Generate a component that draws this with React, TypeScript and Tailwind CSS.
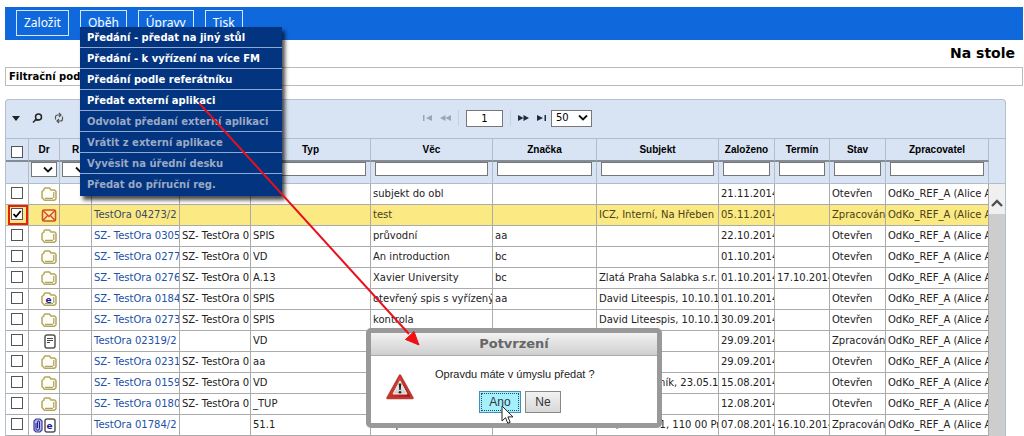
import { useState } from "react"

type Kind = "folder" | "mail" | "efolder" | "doc" | "edoc";

type Row = {
    kind: Kind;
    ref: string;
    file?: string;
    type?: string;
    subject?: string;
    mark?: string;
    party?: string;
    created: string;
    due?: string;
    state: string;
};

const OWNER = "OdKo_REF_A (Alice A";

const rows: Row[] = [
    { kind: "folder", ref: "", subject: "subjekt do obl", created: "21.11.2014", state: "Otevřen" },
    { kind: "mail", ref: "TestOra 04273/2", subject: "test", party: "ICZ, Interní, Na Hřeben", created: "05.11.2014", state: "Zpracován" },
    { kind: "folder", ref: "SZ- TestOra 0305", file: "SZ- TestOra 0", type: "SPIS", subject: "průvodní", mark: "aa", created: "22.10.2014", state: "Otevřen" },
    { kind: "folder", ref: "SZ- TestOra 0277", file: "SZ- TestOra 0", type: "VD", subject: "An introduction", mark: "bc", created: "01.10.2014", state: "Otevřen" },
    { kind: "folder", ref: "SZ- TestOra 0276", file: "SZ- TestOra 0", type: "A.13", subject: "Xavier University", mark: "bc", party: "Zlatá Praha Salabka s.r.", created: "01.10.2014", due: "17.10.2014", state: "Otevřen" },
    { kind: "efolder", ref: "SZ- TestOra 0184", file: "SZ- TestOra 0", type: "SPIS", subject: "otevřený spis s vyřízený", mark: "aa", party: "David Liteespis, 10.10.1", created: "01.10.2014", state: "Otevřen" },
    { kind: "folder", ref: "SZ- TestOra 0273", file: "SZ- TestOra 0", type: "SPIS", subject: "kontrola", party: "David Liteespis, 10.10.1", created: "30.09.2014", state: "Otevřen" },
    { kind: "doc", ref: "TestOra 02319/2", type: "VD", created: "29.09.2014", state: "Zpracován" },
    { kind: "folder", ref: "SZ- TestOra 0231", file: "SZ- TestOra 0", type: "aa", created: "29.09.2014", state: "Otevřen" },
    { kind: "folder", ref: "SZ- TestOra 0159", file: "SZ- TestOra 0", type: "VD", party: "Robert Úředník, 23.05.1", created: "15.08.2014", state: "Otevřen" },
    { kind: "folder", ref: "SZ- TestOra 0180", file: "SZ- TestOra 0", type: "_TUP", created: "12.08.2014", state: "Otevřen" },
    { kind: "edoc", ref: "TestOra 01784/2", type: "51.1", subject: "test předání na více FM", mark: "aa", party: "ICZ, Divoká 1, 110 00 Pr", created: "07.08.2014", due: "16.10.2014", state: "Zpracován" },
];

const menuItems = [
    { label: "Předání - předat na jiný stůl", enabled: true },
    { label: "Předání - k vyřízení na více FM", enabled: true },
    { label: "Předání podle referátníku", enabled: true },
    { label: "Předat externí aplikaci", enabled: true },
    { label: "Odvolat předaní externí aplikaci", enabled: false },
    { label: "Vrátit z externí aplikace", enabled: false },
    { label: "Vyvěsit na úřední desku", enabled: false },
    { label: "Předat do příruční reg.", enabled: false },
];

const headers = ["Typ", "Věc", "Značka", "Subjekt", "Založeno", "Termín", "Stav", "Zpracovatel"];

function FolderIcon({ letter }: { letter?: boolean }) {
    return (
        <svg width="16" height="15" viewBox="0 0 16 15" fill="none">
            <path d="M3.500 13.300 1 10.500V4.500l2-1.500V2l1-1h4.500l1.500 2h3.500L15 4.500v7.300l-1.500 1.500z" fill="#fffef4" stroke="#b5a75e" strokeWidth="1.500" strokeLinejoin="round" />
            <path d="M12.800 5v6M4 11.300h8" stroke="#9a8b45" />
            {letter && <text x="4.500" y="10.500" className="font-['DejaVu_Sans'] text-[9px] font-bold" fill="#1d1a9a">e</text>}
        </svg>
    )
}

function MailIcon() {
    return (
        <svg width="16" height="13" viewBox="0 0 16 13" fill="none" stroke="#cf5222" strokeWidth="1.6">
            <rect x="1.500" y="1" width="13" height="11" rx="1.500" fill="#ffe7a8" />
            <path d="m2 1.500 6 6 6-6M2 11.500l4.500-5M14 11.500l-4.500-5" strokeWidth="1.300" />
        </svg>
    )
}

function DocIcon({ letter }: { letter?: boolean }) {
    return (
        <svg width="14" height="15" viewBox="0 0 14 15" fill="none">
            <rect x="2" y="1" width="10" height="13" rx="2" fill="#fff" stroke="#555" strokeWidth="1.500" />
            {letter ? (
                <text x="3.500" y="10.500" className="font-['DejaVu_Sans'] text-[9px] font-bold" fill="#1d1a9a">e</text>
            ) : (
                <path d="M4 4.500h6M4 6.500h6M4 8.500h3" stroke="#444" />
            )}
        </svg>
    )
}

function ClipIcon() {
    return (
        <svg width="10" height="15" viewBox="0 0 10 15" fill="none">
            <path d="M3 1h4l2 2v9l-2 2H3l-2-2V3z" fill="#b9b9ee" stroke="#3c3c9c" strokeWidth="1.200" />
            <path d="M3 5v5.500a1.500 1.500 0 0 0 3.500 0V4a1 1 0 0 0-2 0v6" stroke="#20208a" />
        </svg>
    )
}

function KindIcon({ kind }: { kind: Kind }) {
    return (
        <span className="flex h-5 items-center justify-end pr-[2px]">
            {kind === "folder" && <FolderIcon />}
            {kind === "efolder" && <FolderIcon letter />}
            {kind === "mail" && <MailIcon />}
            {kind === "doc" && <DocIcon />}
            {kind === "edoc" && <><ClipIcon /><DocIcon letter /></>}
        </span>
    )
}

function Chevron() {
    return (
        <svg className="pointer-events-none absolute right-1 top-1/2 -translate-y-1/2" width="10" height="7" viewBox="0 0 10 7" fill="none" stroke="#111" strokeWidth="1.800">
            <path d="m1 1 4 4 4-4" />
        </svg>
    )
}

function CheckBox({ label, checked, onChange }: { label: string; checked: boolean; onChange: () => void }) {
    return (
        <span className="relative flex size-3">
            <input
                type="checkbox"
                aria-label={label}
                checked={checked}
                onChange={onChange}
                className="size-3 appearance-none border border-[#555] bg-white"
            />
            {checked && (
                <svg className="pointer-events-none absolute inset-0" width="12" height="12" viewBox="0 0 12 12" fill="none" stroke="#000" strokeWidth="1.800">
                    <path d="m2.500 6 2.500 2.700L9.700 3" />
                </svg>
            )}
        </span>
    )
}

function FilterSelect({ label }: { label: string }) {
    return (
        <span className="relative mx-[2px] flex">
            <select aria-label={label} className="h-[15px] w-full appearance-none border border-[#777] bg-white">
                <option></option>
            </select>
            <Chevron />
        </span>
    )
}

function MenuButton({ label }: { label: string }) {
    return (
        <button className="h-[26px] border border-[#d5e6ff] px-[7px] font-['Noto_Sans',sans-serif] text-[12px] leading-6 text-white">
            {label}
        </button>
    )
}

function TopBar() {
    return (
        <nav className="mt-[7px] flex h-[33px] items-start gap-[11px] bg-[#0f69dc] pl-[11px] pt-[3px]">
            <MenuButton label="Založit" />
            <div className="relative">
                <MenuButton label="Oběh" />
                <ul className="absolute left-0 top-[17px] z-20 w-[202px] bg-[#03347f] pb-[2px] shadow-[3px_4px_4px_rgba(0,0,0,0.7)]">
                    {menuItems.map((item) => (
                        <li key={item.label} className="border-b border-[#8fa9d0] last:border-b-0">
                            <button
                                disabled={!item.enabled}
                                className="block h-5 w-full whitespace-nowrap pl-[7px] pt-px text-left text-[10px] font-bold leading-[19px] text-white disabled:text-[#9aa9c4]"
                            >
                                {item.label}
                            </button>
                        </li>
                    ))}
                </ul>
            </div>
            <MenuButton label="Úpravy" />
            <MenuButton label="Tisk" />
        </nav>
    )
}

function Toolbar() {
    return (
        <div className="relative flex h-[38px] items-center pb-[2px]">
            <div className="flex items-center gap-[11px] pl-[6px]">
                <button aria-label="Rozbalit">
                    <svg width="8" height="5" viewBox="0 0 8 5"><path d="M0 0h8L4 5z" fill="#222" /></svg>
                </button>
                <button aria-label="Hledat">
                    <svg width="12" height="12" viewBox="0 0 12 12" fill="none" stroke="#222" strokeWidth="1.500">
                        <circle cx="7.500" cy="5" r="3" />
                        <path d="M5.300 7.300 2 10.500M3.500 8h4" />
                    </svg>
                </button>
                <button aria-label="Obnovit">
                    <svg width="10" height="12" viewBox="0 0 10 12" fill="none" stroke="#555" strokeWidth="1.200">
                        <path d="M1.500 7.500V5A2 2 0 0 1 3.500 3H7M5 1l2 2-2 2M8.500 4.500V7a2 2 0 0 1-2 2H3M5 7 3 9l2 2" />
                    </svg>
                </button>
            </div>
            <div className="absolute inset-x-0 flex items-center justify-center pl-[4px]">
                <button aria-label="První" disabled className="mr-2">
                    <svg width="9" height="6" viewBox="0 0 9 6" fill="#9aa5b5"><path d="M0 0h1.500v6H0zM9 0v6L3 3z" /></svg>
                </button>
                <button aria-label="Předchozí" disabled>
                    <svg width="11" height="6" viewBox="0 0 11 6" fill="#9aa5b5"><path d="M5.500 0v6L0 3zM11 0v6L5.500 3z" /></svg>
                </button>
                <span className="mx-[7px] h-4 border-l border-[#c7d2e0]" />
                <input aria-label="Strana" defaultValue="1" className="h-[17px] w-[37px] border border-[#777] bg-white text-center text-[10px]" />
                <span className="mx-[7px] h-4 border-l border-[#c7d2e0]" />
                <button aria-label="Další" className="mr-2">
                    <svg width="11" height="6" viewBox="0 0 11 6" fill="#1d2c40"><path d="M0 0v6l5.500-3zM5.500 0v6L11 3z" /></svg>
                </button>
                <button aria-label="Poslední" className="mr-[5px]">
                    <svg width="9" height="6" viewBox="0 0 9 6" fill="#1d2c40"><path d="M0 0v6l6-3zM7.500 0H9v6H7.500z" /></svg>
                </button>
                <span className="relative flex">
                    <select aria-label="Počet na stránku" className="h-[17px] w-[41px] appearance-none border border-[#777] bg-white pl-1 text-[10px] leading-none">
                        <option>50</option>
                    </select>
                    <Chevron />
                </span>
            </div>
        </div>
    )
}

const headCell = "h-[23px] border-b-2 border-r border-b-[#868c95] border-r-[#b3bdca] p-0 font-bold overflow-hidden";
const filterCell = "h-[22px] border-b border-r border-[#b3bdca] p-0 align-top";
const cell = "h-[21px] overflow-hidden whitespace-nowrap border-b border-r border-[#ababab] p-0 pl-[2px] leading-5";

function Grid() {
    const [selected, setSelected] = useState<number[]>([1]);

    function toggle(i: number) {
        setSelected(selected.includes(i) ? selected.filter((s) => s !== i) : [...selected, i]);
    }

    return (
        <section className="mr-[17px] mt-[13px] flex-1 overflow-hidden rounded-t-[4px] border border-b-0 border-[#b4bfce] bg-[#d8e3f3]">
            <Toolbar />
            <table className="w-full table-fixed border-separate border-spacing-0 border-t border-[#b3bdca] text-[10px]">
                <colgroup>
                    <col className="w-[23px]" />
                    <col className="w-[31px]" />
                    <col className="w-[32px]" />
                    <col className="w-[88px]" />
                    <col className="w-[71px]" />
                    <col />
                    <col className="w-[122px]" />
                    <col className="w-[104px]" />
                    <col className="w-[122px]" />
                    <col className="w-[56px]" />
                    <col className="w-[55px]" />
                    <col className="w-[56px]" />
                    <col className="w-[103px]" />
                    <col className="w-[16px]" />
                </colgroup>
                <thead className="font-['Liberation_Sans',Arial,sans-serif]">
                    <tr>
                        <th className={headCell}>
                            <span className="flex justify-center pt-1">
                                <CheckBox
                                    label="Vybrat vše"
                                    checked={selected.length === rows.length}
                                    onChange={() => setSelected(selected.length === rows.length ? [] : rows.map((_, i) => i))}
                                />
                            </span>
                        </th>
                        <th className={headCell}>Dr</th>
                        <th className={headCell}>R</th>
                        <th className={headCell}></th>
                        <th className={headCell}></th>
                        {headers.map((h) => <th key={h} className={headCell}>{h}</th>)}
                        <th rowSpan={2} className="border-b border-[#b3bdca] p-0"></th>
                    </tr>
                    <tr>
                        <td className={filterCell}></td>
                        <td className={filterCell}><FilterSelect label="Filtr Dr" /></td>
                        <td className={filterCell}><FilterSelect label="Filtr R" /></td>
                        {["Číslo", "Spis", ...headers].map((h) => (
                            <td key={h} className={filterCell}>
                                <span className="flex px-[4px]">
                                    <input aria-label={"Filtr " + h} className="h-[14px] w-full min-w-0 border border-[#777] bg-white px-px" />
                                </span>
                            </td>
                        ))}
                    </tr>
                </thead>
                <tbody>
                    {rows.map((row, i) => {
                        const on = selected.includes(i);
                        return (
                            <tr key={i} className={on ? "bg-[#fbe983] text-[#4a4215]" : "bg-white text-[#222]"}>
                                <td className="h-[21px] border-b border-r border-[#ababab] p-0">
                                    <span className={on ? "ml-[2px] flex h-5 w-5 items-start border-2 border-[#e8200c] pl-px pt-px" : "ml-[2px] flex h-5 w-5 items-start border-2 border-transparent pl-px pt-px"}>
                                        <CheckBox label={"Vybrat " + row.ref} checked={on} onChange={() => toggle(i)} />
                                    </span>
                                </td>
                                <td className="h-[21px] border-b border-r border-[#ababab] p-0"><KindIcon kind={row.kind} /></td>
                                <td className={cell}></td>
                                <td className={cell}>{row.ref && <a href="#" className={on ? "text-[#3b4a6b]" : "text-[#2050a8]"}>{row.ref}</a>}</td>
                                <td className={cell}>{row.file}</td>
                                <td className={cell}>{row.type}</td>
                                <td className={cell}>{row.subject}</td>
                                <td className={cell}>{row.mark}</td>
                                <td className={cell}>{row.party}</td>
                                <td className={cell}>{row.created}</td>
                                <td className={cell}>{row.due}</td>
                                <td className={cell}>{row.state}</td>
                                <td className={cell}>{OWNER}</td>
                                {i === 0 && (
                                    <td rowSpan={rows.length} className="bg-[#cdcdcd] p-0 align-top">
                                        <div className="flex h-[30px] items-end justify-center bg-[#f0f0f0] pb-[7px]">
                                            <svg width="12" height="8" viewBox="0 0 12 8" fill="none" stroke="#505050" strokeWidth="2.400">
                                                <path d="m1 7 5-5 5 5" />
                                            </svg>
                                        </div>
                                    </td>
                                )}
                            </tr>
                        )
                    })}
                </tbody>
            </table>
        </section>
    )
}

function WarningIcon() {
    return (
        <svg width="30" height="28" viewBox="0 0 30 28">
            <defs>
                <linearGradient id="warn" x1="0" y1="0" x2="1" y2="1">
                    <stop offset="0" stopColor="#f6a59c" />
                    <stop offset="0.5" stopColor="#cf2e26" />
                    <stop offset="1" stopColor="#a01010" />
                </linearGradient>
                <linearGradient id="plate" x1="0" y1="0" x2="0" y2="1">
                    <stop offset="0" stopColor="#fff" />
                    <stop offset="1" stopColor="#c9c9c9" />
                </linearGradient>
            </defs>
            <path d="M15 2.500 27.500 25H2.500z" fill="url(#warn)" stroke="#bb3a33" strokeWidth="2.500" strokeLinejoin="round" />
            <path d="M15 8 22 21H8z" fill="url(#plate)" stroke="#eee" strokeLinejoin="round" />
            <path d="M13.700 10.500h2.600l-.6 6.500h-1.400z" fill="#222" />
            <circle cx="15" cy="19.300" r="1.300" fill="#222" />
        </svg>
    )
}

function ConfirmDialog() {
    return (
        <div className="pointer-events-none absolute inset-x-0 top-[328px] z-20 flex justify-center pl-1">
            <div role="dialog" aria-label="Potvrzení" className="pointer-events-auto w-[296px] rounded-[5px] border-5 border-[#999] bg-white font-['Liberation_Sans',Arial,sans-serif]">
                <h2 className="h-[23px] border-b border-[#aaa] bg-linear-to-b from-[#f2f2f2] to-[#cfcfcf] text-center font-['DejaVu_Sans',Verdana,sans-serif] text-[13px] font-bold leading-[22px] text-[#666]">
                    Potvrzení
                </h2>
                <div className="flex h-[67px] pl-[14px] pt-[10px]">
                    <div className="pt-[7px]"><WarningIcon /></div>
                    <div className="pl-[20px]">
                        <p className="whitespace-nowrap text-[11px] leading-4 text-[#222]">Opravdu máte v úmyslu předat ?</p>
                        <div className="flex gap-1 pl-[44px] pt-[9px]">
                            <button className="h-[22px] w-[42px] border border-[#3c8fc0] bg-[#a3f0ff] p-px text-[12px] text-[#333]">
                                <span className="block h-[18px] border border-dotted border-[#444] leading-4">Ano</span>
                            </button>
                            <button className="h-[22px] w-9 border border-[#888] bg-linear-to-b from-[#f2f2f2] to-[#d8d8d8] text-[12px] text-[#333]">Ne</button>
                        </div>
                    </div>
                </div>
            </div>
        </div>
    )
}

export default function App() {
    return (
        <div className="relative flex min-h-screen flex-col bg-white pl-[5px] pr-px font-['DejaVu_Sans',Verdana,sans-serif] text-black">
            <TopBar />
            <h1 className="pr-2 text-right text-[14px] font-bold leading-[27px]">Na stole</h1>
            <div className="h-[19px] border border-[#bbb] pl-[3px] text-[10px] font-bold leading-[17px]">Filtrační podmínky</div>
            <Grid />
            <ConfirmDialog />

            {/* arrow from the menu item to the dialog */}
            <svg className="pointer-events-none absolute left-[199px] top-[103px] z-30" width="222" height="244" viewBox="0 0 222 244">
                <path d="M0 0 210 231" stroke="#e8101c" strokeWidth="2" />
                <path d="m220 242-13.500-5.500 8.500-8z" fill="#f01010" stroke="#e8101c" />
            </svg>

            {/* mouse pointer */}
            <svg className="pointer-events-none absolute left-[501px] top-[405px] z-30" width="13" height="20" viewBox="0 0 13 20">
                <path d="M1 1v15l3.500-3.300 2.300 5.600 2.400-1-2.300-5.400H12z" fill="#fff" stroke="#222" />
            </svg>
        </div>
    )
}
